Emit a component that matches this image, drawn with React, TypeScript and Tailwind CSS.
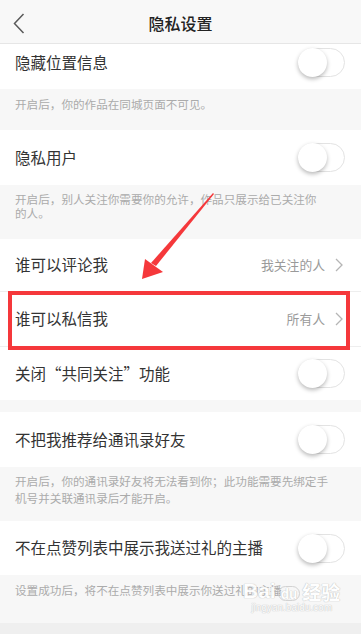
import type { ReactNode } from 'react';

const font = { fontFamily: '"Noto Sans CJK SC", "Noto Sans", sans-serif' };

function Toggle() {
  return (
    <div className="relative h-[29px] w-[47px] rounded-full border border-[#e3e3e3] bg-white">
      <div className="absolute left-[-1px] top-[-1px] h-[29px] w-[29px] rounded-full bg-white shadow-[0_2px_4px_rgba(0,0,0,0.28)]" />
    </div>
  );
}

function Chevron() {
  return (
    <svg width="8" height="14" viewBox="0 0 8 14" className="ml-[10px]">
      <path d="M1 1l6 6-6 6" fill="none" stroke="#b5b5b5" strokeWidth="1.3" />
    </svg>
  );
}

function Row({ label, h, right, extra = '' }: { label: string; h: string; right: ReactNode; extra?: string }) {
  return (
    <div className={`flex items-center justify-between bg-white pl-[15px] pr-[16px] ${h} ${extra}`}>
      <span className="text-[15.5px] text-[#333]">{label}</span>
      {right}
    </div>
  );
}

function Desc({ children, cls }: { children: ReactNode; cls: string }) {
  return <div className={`bg-[#f7f7f7] pl-[15px] text-[11.6px] text-[#ababab] ${cls}`}>{children}</div>;
}

function Value({ text }: { text: string }) {
  return (
    <div className="flex items-center pr-[2px]">
      <span className="text-[12.8px] text-[#9a9a9a]">{text}</span>
      <Chevron />
    </div>
  );
}

export default function App() {
  return (
    <div className="relative h-[634px] w-[361px] overflow-hidden bg-[#efefef]" style={font}>
      <div className="relative flex h-[44px] items-center justify-center border-b border-[#e6e6e6] bg-[#f8f8f8] pt-[3px]">
        <svg width="12" height="21" viewBox="0 0 12 21" className="absolute left-[13px] top-[13px]">
          <path d="M10.5 1L1.5 10.5l9 9.5" fill="none" stroke="#5a5a5a" strokeWidth="1.5" />
        </svg>
        <span className="text-[16px] font-medium text-[#222]">隐私设置</span>
      </div>

      <Row label="隐藏位置信息" h="h-[45px]" extra="pb-[8px]" right={<Toggle />} />
      <Desc cls="h-[41px] pt-[7px] pr-[24px] leading-[16px]">开启后，你的作品在同城页面不可见。</Desc>

      <Row label="隐私用户" h="h-[55px]" right={<Toggle />} />
      <Desc cls="h-[54px] pt-[7px] pr-[38px] leading-[14px]">
        开启后，别人关注你需要你的允许，作品只展示给已关注你的人。
      </Desc>

      <Row label="谁可以评论我" h="h-[53px]" extra="border-b border-[#eeeeee]" right={<Value text="我关注的人" />} />
      <Row label="谁可以私信我" h="h-[55px]" extra="border-b border-[#eeeeee]" right={<Value text="所有人" />} />
      <Row label="关闭“共同关注”功能" h="h-[53px]" right={<Toggle />} />
      <div className="h-[12px] bg-[#f7f7f7]" />

      <Row label="不把我推荐给通讯录好友" h="h-[55px]" right={<Toggle />} />
      <Desc cls="h-[54px] pt-[6px] pr-[24px] leading-[16.5px]">
        开启后，你的通讯录好友将无法看到你；此功能需要先绑定手机号并关联通讯录后才能开启。
      </Desc>

      <Row label="不在点赞列表中展示我送过礼的主播" h="h-[54px]" right={<Toggle />} />
      <Desc cls="h-[48px] pt-[7px] pr-[16px] leading-[16px]">设置成功后，将不在点赞列表中展示你送过礼的主播</Desc>

      {/* 红框标注 */}
      <div className="absolute left-[8px] top-[291px] h-[59px] w-[342px] border-[4px] border-[#f5383b]" />

      {/* 红色箭头 */}
      <svg width="361" height="634" className="pointer-events-none absolute left-0 top-0">
        <polygon points="213,193 214,194 156,266 151,263" fill="#f5383b" />
        <polygon points="142,279 145,259 163,272" fill="#f5383b" />
      </svg>

      {/* 水印 */}
      <div className="pointer-events-none absolute left-[243px] top-[580px] flex flex-col items-center text-white opacity-90 [text-shadow:0_0_1px_#bdbdbd,0_0_1px_#bdbdbd]">
        <div className="flex items-end leading-none">
          <span className="text-[21px] font-bold" style={{ fontFamily: '"Liberation Sans", sans-serif' }}>
            Bai
          </span>
          <span className="mx-[2px] rounded-full border border-[#cfcfcf] px-[2px] text-[13px] font-bold">du</span>
          <span className="text-[19px] font-bold">经验</span>
        </div>
        <span className="mt-[2px] text-[10px] leading-none" style={{ fontFamily: '"Liberation Sans", sans-serif' }}>
          jingyan.baidu.com
        </span>
      </div>
    </div>
  );
}
